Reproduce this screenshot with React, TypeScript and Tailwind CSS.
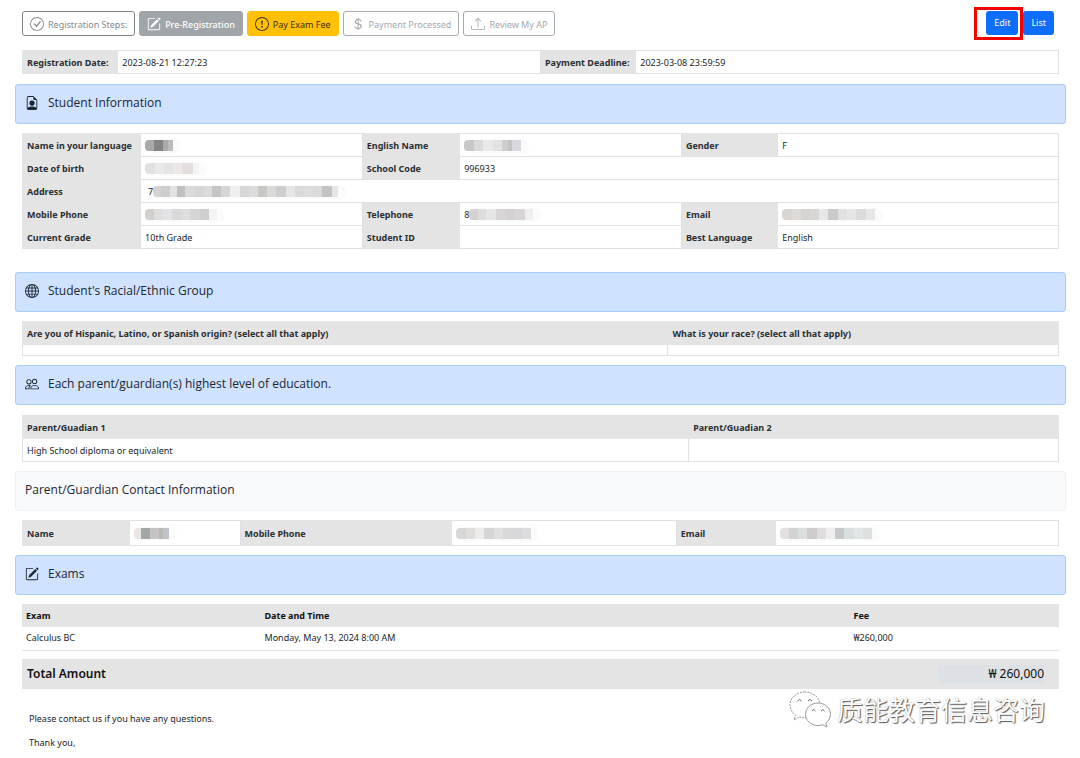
import type { ReactNode } from 'react'
import {
  BsCheckCircle,
  BsCurrencyDollar,
  BsExclamationCircle,
  BsFileEarmarkPerson,
  BsGlobe,
  BsPencilSquare,
  BsPeople,
  BsUpload,
} from 'react-icons/bs'

const STEPS = [
  { label: 'Registration Steps:', icon: BsCheckCircle, style: 'border-[#7d8185] bg-white text-[#85898d]' },
  { label: 'Pre-Registration', icon: BsPencilSquare, style: 'border-[#a0a5aa] bg-[#a0a5aa] text-white font-medium' },
  { label: 'Pay Exam Fee', icon: BsExclamationCircle, style: 'border-[#ffc107] bg-[#ffc107] text-[#3b2d05]' },
  { label: 'Payment Processed', icon: BsCurrencyDollar, style: 'border-[#a6abb0] bg-white text-[#a3a8ad]' },
  { label: 'Review My AP', icon: BsUpload, style: 'border-[#a6abb0] bg-white text-[#a3a8ad]' },
]

type Block = [width: number, color: string]

const MASKS: Record<string, Block[]> = {
  name: [[9, '#a9a9a9'], [9, '#858384'], [5, '#aaaaaa'], [5, '#bdbdbd']],
  english: [[10, '#c9c8c9'], [9, '#dadada'], [10, '#e9e9e9'], [9, '#e2e2e2'], [6, '#d0cdcd'], [4, '#c2c2c4'], [9, '#d8d8de']],
  birth: [[10, '#e2e0e0'], [9, '#ebe9e9'], [9, '#e5e3e3'], [9, '#ebe8e8'], [11, '#e4dfdf'], [6, '#f4f4f4']],
  address: [
    [8, '#d5d3d1'], [9, '#cecccc'], [7, '#e2e2e2'], [8, '#bfc0c2'], [10, '#dcdad9'], [9, '#d7d5d5'], [8, '#dbdbdb'],
    [9, '#c6c5c5'], [9, '#d6d6d6'], [10, '#efefef'], [9, '#d8d7d7'], [9, '#dddbdb'], [9, '#c9c8c5'], [9, '#dadada'],
    [10, '#cecece'], [9, '#e8e4e4'], [9, '#dadada'], [9, '#dedcdf'], [9, '#dadada'], [10, '#c3c3c5'], [6, '#e4e6e8'],
  ],
  mobile: [[9, '#d2cfcd'], [8, '#dedede'], [10, '#e2e3e5'], [9, '#d9d9db'], [9, '#dededf'], [10, '#d5d5d6'], [9, '#cfcfd0'], [8, '#f3f3f4']],
  telephone: [[9, '#d5d1d1'], [8, '#e0dcdc'], [10, '#e6e6e8'], [10, '#d8d5d5'], [9, '#d5d1d2'], [10, '#dad6d8'], [8, '#eeeeef']],
  email: [[10, '#d8d5d3'], [9, '#dddad7'], [9, '#d6d3d1'], [9, '#d7d6d4'], [9, '#e5e7e8'], [10, '#c9cbcb'], [9, '#e2e0e2'], [9, '#e6e6e8'], [10, '#dddadc'], [9, '#e8e6e8']],
  contactName: [[7, '#ebe6e3'], [9, '#a5a7a6'], [9, '#c6c3c4'], [4, '#b9b7ba'], [6, '#bfc3c7']],
  contactPhone: [[10, '#d9d7d6'], [9, '#e0dedd'], [9, '#ececed'], [10, '#d6d5d6'], [9, '#e2dfe0'], [9, '#dad9da'], [10, '#d8d8da'], [9, '#dddcdf']],
  contactEmail: [[9, '#e4e0df'], [9, '#d2d3d3'], [9, '#dcdddd'], [10, '#cfcbcb'], [9, '#e0dddd'], [9, '#eeeeee'], [9, '#c7c8c9'], [10, '#d9dfe0'], [9, '#e0e5e6'], [9, '#dddfe1']],
}

/** Masked personal value: a strip of grey blocks over a soft brush mark. */
function Masked({ id, label }: { id: string; label: string }) {
  const blocks = MASKS[id]
  const total = blocks.reduce((sum, [w]) => sum + w, 0)
  let x = 0
  return (
    <svg width={total + 8} height="14" viewBox={`0 0 ${total + 8} 14`} role="img" aria-label={label} className="block">
      <rect x="0" y="0" width={total + 8} height="14" rx="7" fill="#fafbfb" />
      <clipPath id={`mask-${id}`}>
        <rect x="0" y="1" width={total + 10} height="11" rx="4" />
      </clipPath>
      <g clipPath={`url(#mask-${id})`}>
        {blocks.map(([w, color], i) => {
          const left = x
          x += w
          return <rect key={i} x={left} y="1" width={w} height="11" fill={color} />
        })}
      </g>
    </svg>
  )
}

function SectionBar({ icon, children, light }: { icon?: ReactNode; children: ReactNode; light?: boolean }) {
  return (
    <h2
      className={`flex h-10 items-center gap-[9px] rounded-[3px] border px-[9px] pb-[2px] font-['Open_Sans',sans-serif] text-[12px] text-[#1c2733] ${
        light ? 'border-[#eef0f2] bg-[#f8f9fb]' : 'border-[#a9cbfd] bg-[#cfe2ff]'
      }`}
    >
      {icon}
      {children}
    </h2>
  )
}

function Th({ children }: { children?: ReactNode }) {
  return (
    <th className="h-[23px] border border-[#e2e4e7] bg-[#e4e4e4] px-1 pt-[2px] pb-0 text-left font-bold whitespace-nowrap text-[#2b2f33]">
      {children}
    </th>
  )
}

function Td({ children, span }: { children?: ReactNode; span?: number }) {
  return (
    <td colSpan={span} className="border border-[#dee2e6] px-1 pt-[2px] pb-0 text-[#212529]">
      {children}
    </td>
  )
}

const TABLE = 'w-full table-fixed border-collapse'

export default function App() {
  return (
    <main className="bg-white pt-[11px] pr-[14px] pl-[15px] font-['Noto_Sans','Open_Sans',sans-serif] text-[9px] leading-3 text-[#212529]">
      <header className="flex items-start justify-between pr-3 pl-[7px]">
        <nav className="flex gap-1" aria-label="Registration steps">
          {STEPS.map(({ label, icon: Icon, style }) => (
            <button key={label} type="button" className={`flex h-[25px] items-center gap-1 rounded-[3px] border px-[7px] ${style}`}>
              <Icon className="size-[14px]" />
              <span className="pt-[3px]">{label}</span>
            </button>
          ))}
        </nav>
        <div className="flex gap-[5px] text-white">
          <span className="relative">
            <button type="button" className="h-6 rounded-[3px] bg-[#0d6efd] px-2">
              Edit
            </button>
            <span className="pointer-events-none absolute -top-1 -right-[5px] -bottom-[5px] -left-3 border-[3px] border-[#f40000]" />
          </span>
          <button type="button" className="h-6 rounded-[3px] bg-[#0d6efd] px-2">
            List
          </button>
        </div>
      </header>

      <div className="mt-[14px] px-[7px]">
        <table className={TABLE}>
          <colgroup>
            <col className="w-[9.2%]" />
            <col className="w-[40.8%]" />
            <col className="w-[9.2%]" />
            <col />
          </colgroup>
          <tbody>
            <tr>
              <Th>Registration Date:</Th>
              <Td>2023-08-21 12:27:23</Td>
              <Th>Payment Deadline:</Th>
              <Td>2023-03-08 23:59:59</Td>
            </tr>
          </tbody>
        </table>
      </div>

      <div className="mt-[10px]">
        <SectionBar icon={<BsFileEarmarkPerson className="size-[14px]" />}>Student Information</SectionBar>
        <div className="mt-[9px] px-[7px]">
          <table className={TABLE}>
            <colgroup>
              <col className="w-[11.4%]" />
              <col className="w-[21.4%]" />
              <col className="w-[9.4%]" />
              <col className="w-[21.4%]" />
              <col className="w-[9.3%]" />
              <col />
            </colgroup>
            <tbody>
              <tr>
                <Th>Name in your language</Th>
                <Td><Masked id="name" label="Name hidden" /></Td>
                <Th>English Name</Th>
                <Td><Masked id="english" label="English name hidden" /></Td>
                <Th>Gender</Th>
                <Td>F</Td>
              </tr>
              <tr>
                <Th>Date of birth</Th>
                <Td><Masked id="birth" label="Date of birth hidden" /></Td>
                <Th>School Code</Th>
                <Td span={3}>996933</Td>
              </tr>
              <tr>
                <Th>Address</Th>
                <Td span={5}>
                  <div className="flex items-center pl-[3px]">
                    7<Masked id="address" label="Address hidden" />
                  </div>
                </Td>
              </tr>
              <tr>
                <Th>Mobile Phone</Th>
                <Td><Masked id="mobile" label="Mobile phone hidden" /></Td>
                <Th>Telephone</Th>
                <Td>
                  <div className="flex items-center">
                    8<Masked id="telephone" label="Telephone hidden" />
                  </div>
                </Td>
                <Th>Email</Th>
                <Td><Masked id="email" label="Email hidden" /></Td>
              </tr>
              <tr>
                <Th>Current Grade</Th>
                <Td>10th Grade</Td>
                <Th>Student ID</Th>
                <Td />
                <Th>Best Language</Th>
                <Td>English</Td>
              </tr>
            </tbody>
          </table>
        </div>
      </div>

      <div className="mt-[23px]">
        <SectionBar icon={<BsGlobe className="size-[14px]" />}>Student's Racial/Ethnic Group</SectionBar>
        <div className="mt-[9px] px-[7px]">
          <table className={TABLE}>
            <colgroup>
              <col className="w-[62.3%]" />
              <col />
            </colgroup>
            <thead>
              <tr>
                <Th>Are you of Hispanic, Latino, or Spanish origin? (select all that apply)</Th>
                <Th>What is your race? (select all that apply)</Th>
              </tr>
            </thead>
            <tbody>
              <tr className="h-[11px]">
                <Td />
                <Td />
              </tr>
            </tbody>
          </table>
        </div>
      </div>

      <div className="mt-[9px]">
        <SectionBar icon={<BsPeople className="size-[14px]" />}>Each parent/guardian(s) highest level of education.</SectionBar>
        <div className="mt-[10px] px-[7px]">
          <table className={TABLE}>
            <colgroup>
              <col className="w-[64.3%]" />
              <col />
            </colgroup>
            <thead>
              <tr>
                <Th>Parent/Guadian 1</Th>
                <Th>Parent/Guadian 2</Th>
              </tr>
            </thead>
            <tbody>
              <tr className="h-[23px]">
                <Td>High School diploma or equivalent</Td>
                <Td />
              </tr>
            </tbody>
          </table>
        </div>
      </div>

      <div className="mt-[9px]">
        <SectionBar light>Parent/Guardian Contact Information</SectionBar>
        <div className="mt-[9px] px-[7px]">
          <table className={TABLE}>
            <colgroup>
              <col className="w-[10.3%]" />
              <col className="w-[10.7%]" />
              <col className="w-[20.4%]" />
              <col className="w-[21.7%]" />
              <col className="w-[9.6%]" />
              <col />
            </colgroup>
            <tbody>
              <tr className="h-[25px]">
                <Th>Name</Th>
                <Td><Masked id="contactName" label="Name hidden" /></Td>
                <Th>Mobile Phone</Th>
                <Td><Masked id="contactPhone" label="Mobile phone hidden" /></Td>
                <Th>Email</Th>
                <Td><Masked id="contactEmail" label="Email hidden" /></Td>
              </tr>
            </tbody>
          </table>
        </div>
      </div>

      <div className="mt-[9px]">
        <SectionBar icon={<BsPencilSquare className="size-[14px]" />}>Exams</SectionBar>
        <div className="mt-[9px] px-[7px]">
          <table className={TABLE}>
            <colgroup>
              <col className="w-[23%]" />
              <col className="w-[56.8%]" />
              <col />
            </colgroup>
            <thead className="bg-[#e4e4e4] text-left text-[#111]">
              <tr className="h-[23px]">
                <th className="px-1 py-0">Exam</th>
                <th className="px-1 py-0">Date and Time</th>
                <th className="px-1 py-0">Fee</th>
              </tr>
            </thead>
            <tbody>
              <tr className="h-[23px] border-b border-[#dee2e6]">
                <td className="px-1 py-0">Calculus BC</td>
                <td className="px-1 py-0">Monday, May 13, 2024 8:00 AM</td>
                <td className="px-1 py-0">₩260,000</td>
              </tr>
            </tbody>
          </table>
          <div className="mt-2 flex h-[30px] items-center justify-between bg-[#e4e4e4] pr-[15px] pl-[5px] text-[12px] text-[#111]">
            <span className="font-semibold">Total Amount</span>
            <output className="w-[106px] bg-[#dde1e6] py-[3px] text-right">₩ 260,000</output>
          </div>
        </div>
      </div>

      <footer className="relative px-[14px] pt-6">
        <p>Please contact us if you have any questions.</p>
        <p className="pt-3">Thank you,</p>
        <div className="absolute top-0 right-[21px] flex items-center gap-[6px]">
          <svg width="42" height="38" viewBox="0 0 42 38" fill="#fff" stroke="#9a9a9a" strokeLinejoin="round" aria-hidden="true">
            <path d="M16 2C8 2 1 7.500 1 15c0 4.200 2.200 7.600 5.500 10L5 30l5.500-3c1.800.5 3.600.8 5.500.8 8 0 15-5.500 15-12.800S24 2 16 2Z" strokeDasharray="2 1" />
            <path d="M29 13c-7 0-12.500 5-12.500 11.300S22 35.500 29 35.500c1.500 0 3-.3 4.400-.8L38 37l-1.200-4c2.900-2.200 4.700-5.200 4.700-8.700C41.500 18 36 13 29 13Z" />
            <path d="M8.500 11q2-3 4 0M19 11q2-3 4 0M23 21q2-3 3.500 0M32 21q2-3 3.500 0" fill="none" stroke="#666" />
          </svg>
          <span className="font-['Noto_Sans_CJK_SC',sans-serif] text-[26px] leading-[40px] text-white [text-shadow:1px_1px_1px_#555,0_0_1px_#999]">
            质能教育信息咨询
          </span>
        </div>
      </footer>
    </main>
  )
}
